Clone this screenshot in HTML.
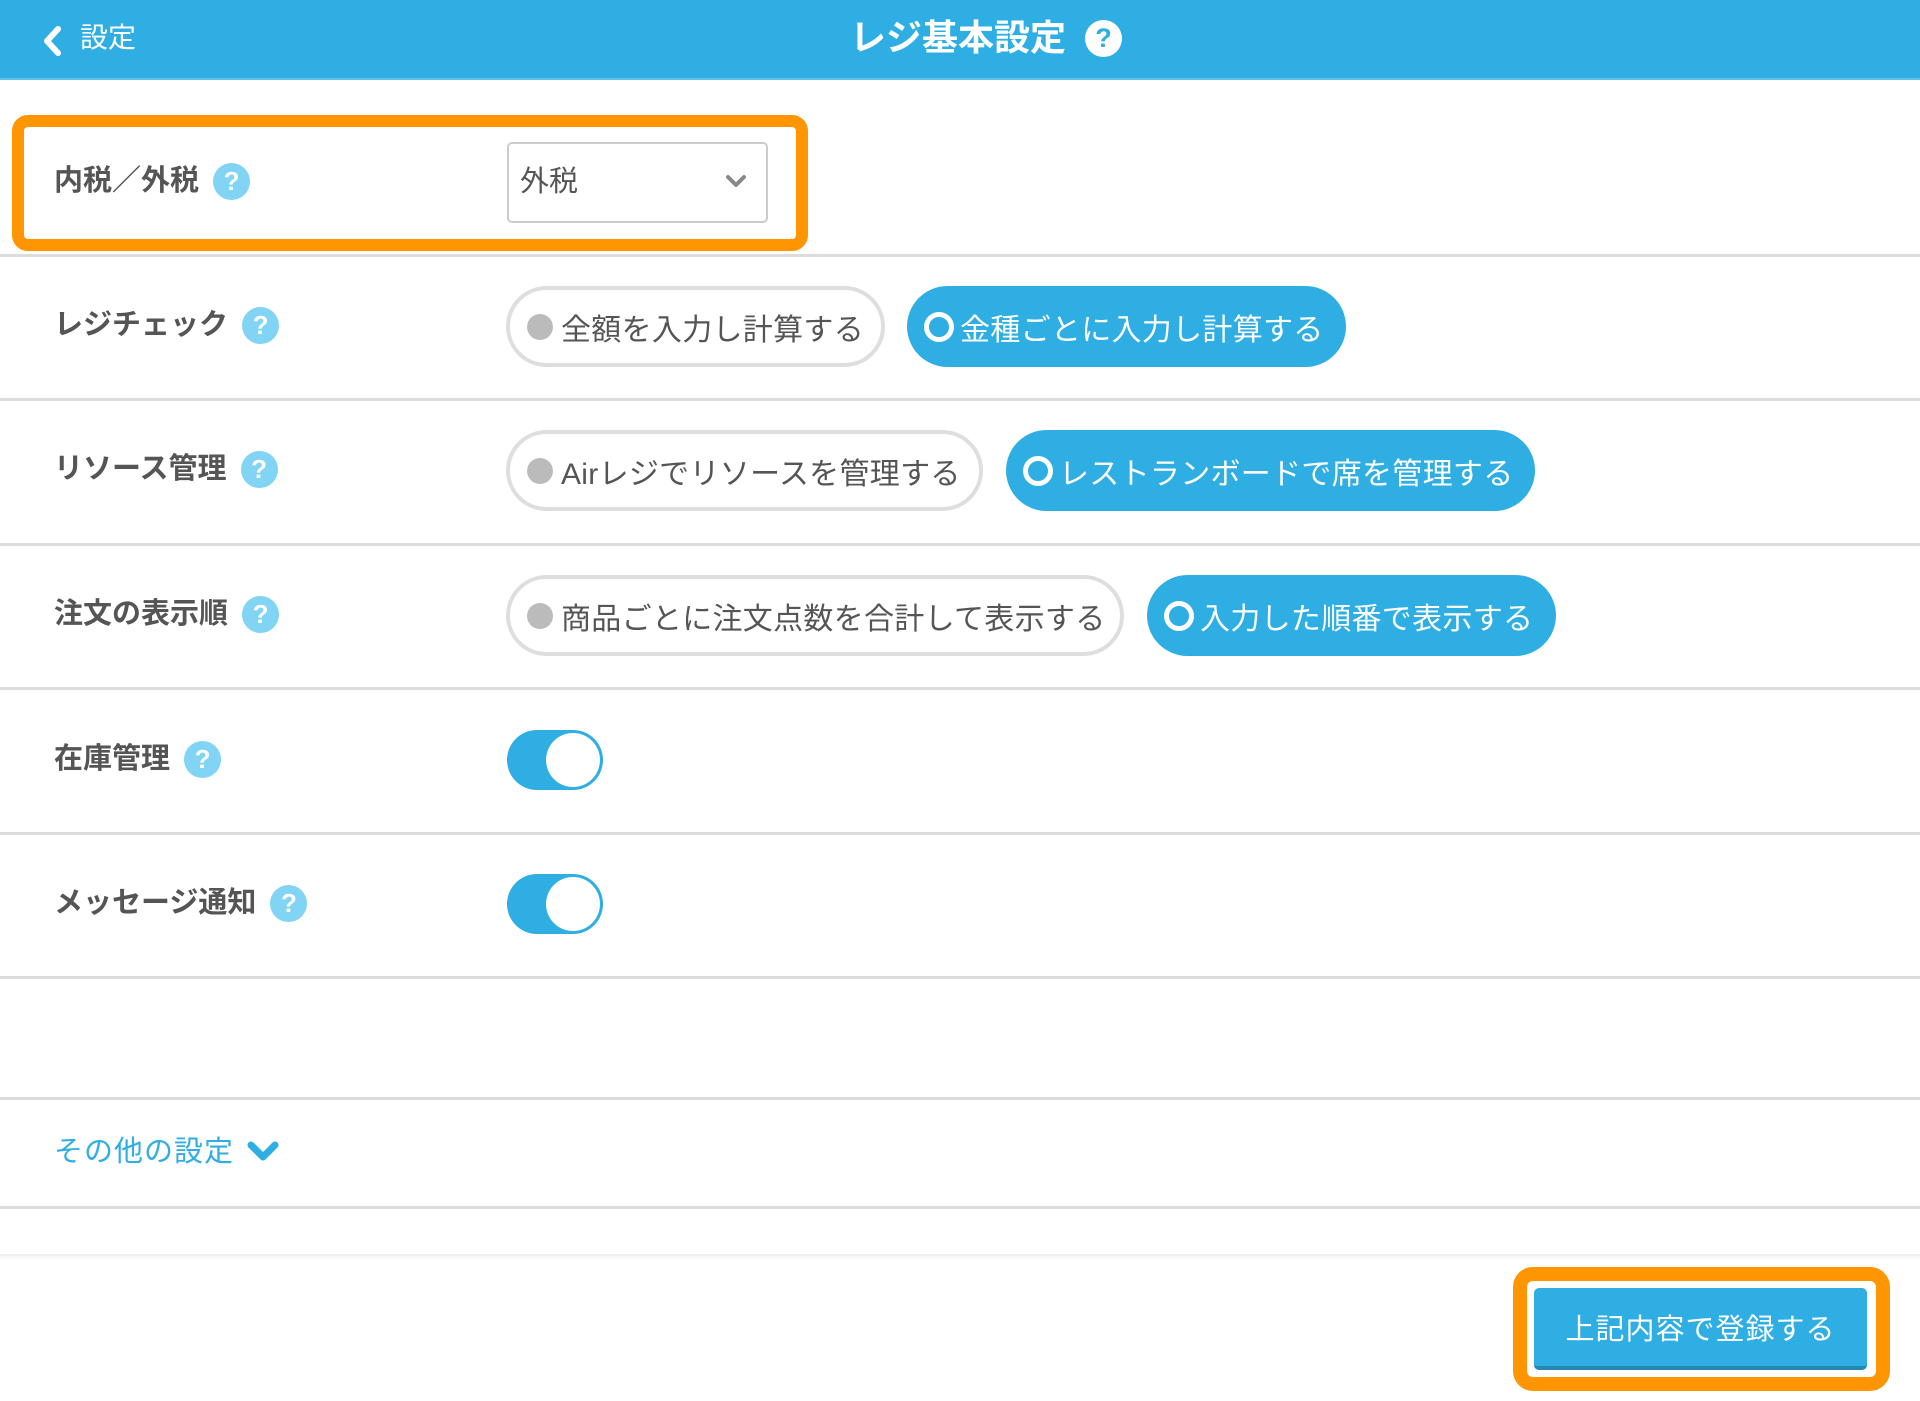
<!DOCTYPE html>
<html><head><meta charset="utf-8"><style>
*{margin:0;padding:0;box-sizing:border-box}
body{width:1920px;height:1401px;background:#fff;position:relative;overflow:hidden;font-family:"Liberation Sans","Noto Sans CJK JP",sans-serif;color:#555}
.hdr{position:absolute;left:0;top:0;width:1920px;height:80px;background:#2eaee2;border-bottom:2px solid #5ec3ec}
.a{position:absolute;white-space:nowrap}
.sep{position:absolute;left:0;width:1920px;height:3px;background:#dcdcdc}
.lbl{position:absolute;left:54px;font-size:29px;font-weight:bold;color:#555;line-height:40px;display:flex;align-items:center;gap:14px;white-space:nowrap}
.q{width:37px;height:37px;border-radius:50%;background:#81d4f3;color:#fff;font-size:26px;font-weight:bold;display:flex;align-items:center;justify-content:center;line-height:1}
.pill{position:absolute;height:81px;border-radius:41px;display:flex;align-items:center;font-size:30px;letter-spacing:0.3px;padding-left:17px;white-space:nowrap}
.off{border:4px solid #dedede;color:#555;background:#fff}
.on{background:#2eaee2;color:#fff}
.dot{width:26px;height:26px;border-radius:50%;background:#bbb;margin-right:8px;flex:none}
.ring{width:30px;height:30px;border-radius:50%;border:5px solid #fff;margin-right:6px;flex:none}
.tog{position:absolute;left:507px;width:96px;height:60px;border-radius:30px;background:#2eaee2}
.tog i{position:absolute;right:3px;top:3px;width:54px;height:54px;border-radius:50%;background:#fff}
</style></head><body>
<div class="hdr"></div>
<svg class="a" style="left:40px;top:25px" width="24" height="32" viewBox="0 0 24 32"><path d="M18 4 L7 16 L18 28" fill="none" stroke="#fff" stroke-width="6" stroke-linecap="round" stroke-linejoin="round"/></svg>
<div class="a" style="left:80px;top:18px;font-size:28px;color:#fff;line-height:40px">設定</div>
<div class="a" style="left:850px;top:14px;font-size:36px;font-weight:bold;color:#fff;line-height:48px">レジ基本設定</div>
<div class="a" style="left:1085px;top:20px;width:37px;height:37px;border-radius:50%;background:#fff;color:#2eaee2;font-size:27px;font-weight:bold;display:flex;align-items:center;justify-content:center">?</div>

<div class="a" style="left:12px;top:115px;width:796px;height:136px;border:12px solid #ff9500;border-radius:16px"></div>
<div class="lbl" style="top:161px">内税／外税<span class="q">?</span></div>
<div class="a" style="left:507px;top:142px;width:261px;height:81px;border:2px solid #ccc;border-radius:5px"></div>
<div class="a" style="left:520px;top:162px;font-size:29px;color:#555;line-height:40px">外税</div>
<svg class="a" style="left:724px;top:173px" width="24" height="16" viewBox="0 0 24 16"><path d="M4 4 L12 12 L20 4" fill="none" stroke="#888" stroke-width="4" stroke-linecap="round" stroke-linejoin="round"/></svg>
<div class="sep" style="top:254px"></div>

<div class="lbl" style="top:305px">レジチェック<span class="q">?</span></div>
<div class="pill off" style="left:506px;top:286px;width:379px"><span class="dot"></span>全額を入力し計算する</div>
<div class="pill on" style="left:907px;top:286px;width:439px"><span class="ring"></span>金種ごとに入力し計算する</div>
<div class="sep" style="top:398px"></div>

<div class="lbl" style="top:449px">リソース管理<span class="q">?</span></div>
<div class="pill off" style="left:506px;top:430px;width:477px"><span class="dot"></span>Airレジでリソースを管理する</div>
<div class="pill on" style="left:1006px;top:430px;width:529px"><span class="ring"></span>レストランボードで席を管理する</div>
<div class="sep" style="top:543px"></div>

<div class="lbl" style="top:594px">注文の表示順<span class="q">?</span></div>
<div class="pill off" style="left:506px;top:575px;width:618px"><span class="dot"></span>商品ごとに注文点数を合計して表示する</div>
<div class="pill on" style="left:1147px;top:575px;width:409px"><span class="ring"></span>入力した順番で表示する</div>
<div class="sep" style="top:687px"></div>

<div class="lbl" style="top:739px">在庫管理<span class="q">?</span></div>
<div class="tog" style="top:730px"><i></i></div>
<div class="sep" style="top:832px"></div>

<div class="lbl" style="top:883px">メッセージ通知<span class="q">?</span></div>
<div class="tog" style="top:874px"><i></i></div>
<div class="sep" style="top:976px"></div>

<div class="sep" style="top:1097px"></div>
<div class="a" style="left:54px;top:1132px;font-size:29px;color:#2eaee2;line-height:40px;letter-spacing:1px">その他の設定</div>
<svg class="a" style="left:246px;top:1140px" width="34" height="24" viewBox="0 0 34 24"><path d="M5 5 L17 17 L29 5" fill="none" stroke="#2eaee2" stroke-width="7" stroke-linecap="round" stroke-linejoin="round"/></svg>
<div class="sep" style="top:1206px"></div>

<div class="a" style="left:0;top:1254px;width:1920px;height:6px;background:linear-gradient(#eee,#fff)"></div>
<div class="a" style="left:1513px;top:1267px;width:377px;height:124px;border:14px solid #ff9500;border-radius:20px"></div>
<div class="a" style="left:1534px;top:1288px;width:333px;height:82px;background:#2eaee2;border-radius:5px;border-bottom:4px solid #2487b4;color:#fff;font-size:29px;letter-spacing:1px;display:flex;align-items:center;justify-content:center">上記内容で登録する</div>
</body></html>
